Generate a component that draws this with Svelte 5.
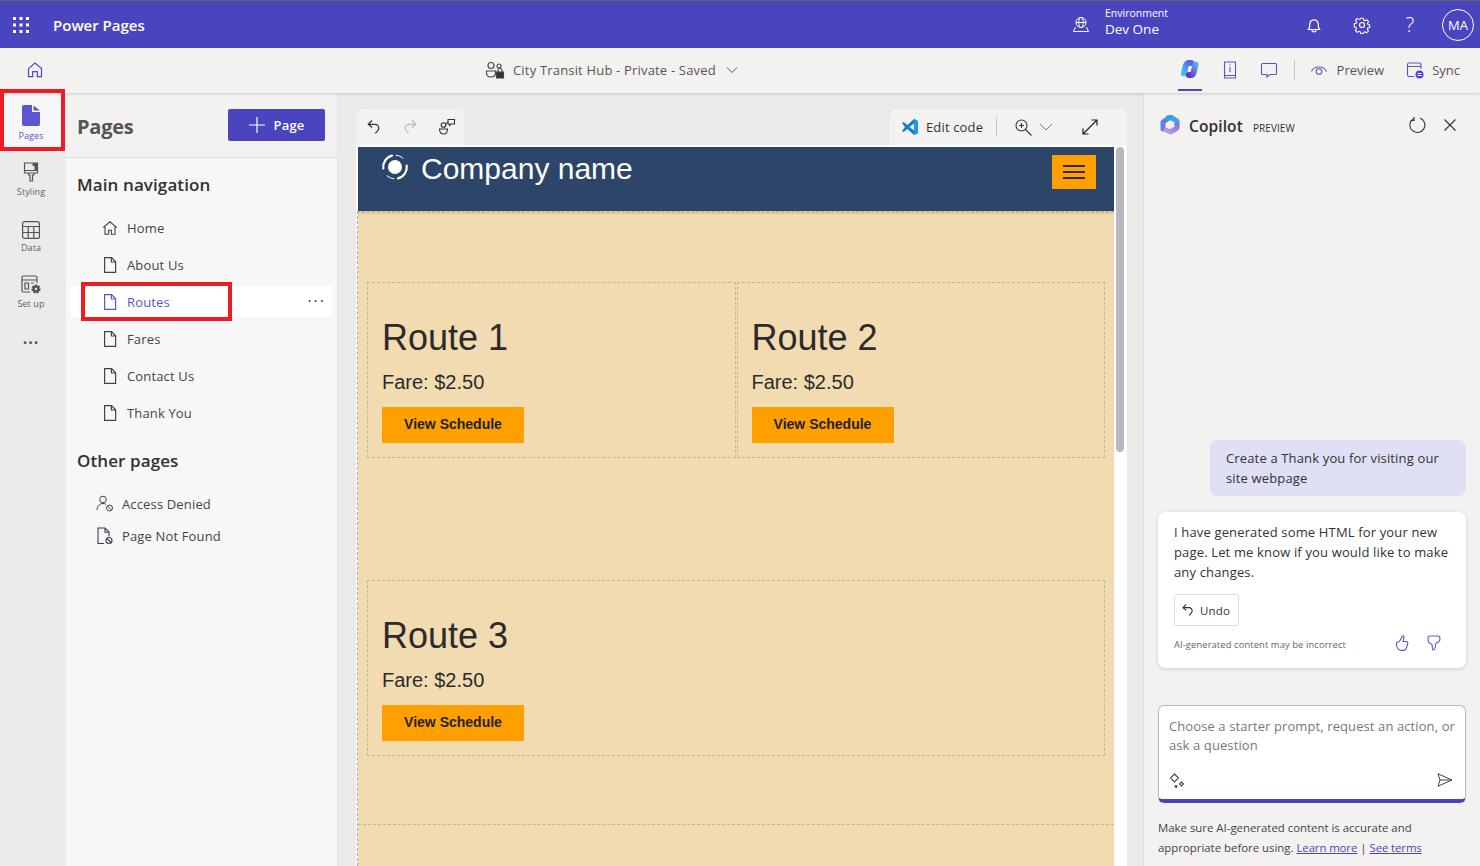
<script>
  const mainNav = [
    { label: 'Home', icon: 'home' },
    { label: 'About Us', icon: 'page' },
    { label: 'Routes', icon: 'page', active: true },
    { label: 'Fares', icon: 'page' },
    { label: 'Contact Us', icon: 'page' },
    { label: 'Thank You', icon: 'page' }
  ];
  const routes = ['Route 1', 'Route 2'];
</script>

{#snippet undoIcon(size = 16)}
  <svg width={size} height={size} viewBox="0 0 16 16" fill="none" stroke="currentColor" stroke-width="1.200"><path d="M6 1.500 2.200 5.300 6.200 8.500M2.400 5.300h6.800a3.700 3.700 0 0 1 3.600 3.800c0 2-1.300 3.300-3.500 5.200"/></svg>
{/snippet}

{#snippet fileIcon()}
  <svg width="16" height="18" viewBox="0 0 16 18" fill="none" stroke="currentColor" stroke-width="1.200"><path d="M2.600 1.600h7l4 4.200v10.600h-11zM9.400 1.600v4.400h4.200"/></svg>
{/snippet}

{#snippet card(title)}
  <h2>{title}</h2>
  <p>Fare: $2.50</p>
  <span class="cta">View Schedule</span>
{/snippet}

<div class="app">
  <header class="topbar">
    <svg class="waffle" width="16" height="16" viewBox="0 0 16 16" fill="#fff">
      {#each [0, 6.500, 13] as y}{#each [0, 6.500, 13] as x}<rect x={x} y={y} width="3" height="3" />{/each}{/each}
    </svg>
    <span class="brand">Power Pages</span>
    <div class="env">
      <svg width="18" height="18" viewBox="0 0 18 18" fill="none" stroke="#fff" stroke-width="1"><circle cx="9" cy="6.500" r="5"/><ellipse cx="9" cy="6.500" rx="2.200" ry="5"/><path d="M4 6.500h10M3.500 11 1.500 15.500h15L14.500 11"/></svg>
      <div class="env-text"><small>Environment</small><strong>Dev One</strong></div>
    </div>
    <div class="top-icons">
      <svg width="18" height="18" viewBox="0 0 18 18" fill="none" stroke="#fff" stroke-width="1.200"><path d="M3.500 13.500c1-1 1.300-2 1.300-5.500a4.200 4.200 0 0 1 8.400 0c0 3.500.3 4.500 1.300 5.500zM7 14c0 2.500 4 2.500 4 0"/></svg>
      <svg width="18" height="18" viewBox="0 0 18 18" fill="none" stroke="#fff" stroke-width="1.200"><circle cx="9" cy="9" r="2.500"/><path d="M7.600 1.500h2.800l.5 2.200 1.400.6 2-1.200 2 2-1.200 2 .6 1.400 1.800.5v2.800l-2 .5-.6 1.400 1.200 2-2 2-2-1.200-1.400.6-.5 1.400H7.600l-.5-1.900-1.400-.6-2 1.200-2-2 1.200-2-.6-1.400-1.800-.5V7.500l2-.5.5-1.400-1.200-2 2-2 2 1.200 1.400-.6z" transform="translate(.9 .9) scale(.9)"/></svg>
      <span class="question">?</span>
      <span class="avatar">MA</span>
    </div>
  </header>

  <div class="subbar">
    <svg class="home-btn" width="18" height="18" viewBox="0 0 18 18" fill="none" stroke="#4f48c4" stroke-width="1.200"><path d="M2.500 7.600 9 2l6.500 5.600v8h-4.200v-5H6.700v5H2.500z"/></svg>
    <div class="site">
      <svg width="20" height="18" viewBox="0 0 20 18" fill="none" stroke="#444" stroke-width="1.100"><circle cx="6" cy="4.500" r="3"/><circle cx="14" cy="5" r="2"/><path d="M1.500 10h9v2c0 3-2 4-4.500 4s-4.500-1-4.500-4z"/><rect x="11.500" y="11" width="7" height="6" fill="#333"/><path d="M13 11V9.500a2 2 0 0 1 4 0V11"/></svg>
      <span>City Transit Hub - Private - Saved</span>
      <svg width="12" height="8" viewBox="0 0 12 8" fill="none" stroke="#555" stroke-width="1"><path d="m1 1.500 5 5 5-5"/></svg>
    </div>
    <div class="sub-actions">
      <span class="tab-selected">
        <svg width="22" height="20" viewBox="0 0 20 18" fill="none" stroke-linecap="round">
          <defs>
            <linearGradient id="cgl" x1="0" y1="1" x2="1" y2="0"><stop offset="0" stop-color="#45c0f0"/><stop offset="1" stop-color="#5a5ce8"/></linearGradient>
            <linearGradient id="cgr" x1="1" y1="0" x2="0" y2="1"><stop offset="0" stop-color="#5aa5f5"/><stop offset="1" stop-color="#6a2fc0"/></linearGradient>
          </defs>
          <path d="M11 3.500H9C7 3.500 6.500 5 6 6.500L4.500 13" stroke="url(#cgl)" stroke-width="5.500"/>
          <path d="M15 5 13.500 11.500C13 13.500 12 14.500 10.500 14.500H9" stroke="url(#cgr)" stroke-width="5.500"/>
        </svg>
      </span>
      <svg class="ic-book" width="14" height="18" viewBox="0 0 14 18" fill="none" stroke="#5b55c9" stroke-width="1.100"><path d="M1.500 1h11v16h-11zM1.500 14.500h11M7 6v5M7 3.500v1"/></svg>
      <svg class="ic-chat" width="18" height="18" viewBox="0 0 18 18" fill="none" stroke="#5b55c9" stroke-width="1.100"><path d="M2.500 2.500h13a1 1 0 0 1 1 1v9a1 1 0 0 1-1 1H10L7 16v-2.500H2.500a1 1 0 0 1-1-1v-9a1 1 0 0 1 1-1z"/></svg>
      <i class="sep"></i>
      <span class="action"><svg width="18" height="14" viewBox="0 0 18 14" fill="none" stroke="#5b55c9" stroke-width="1.100"><path d="M1.500 8.500C4 2.500 14 2.500 16.500 8.500"/><circle cx="9" cy="8.500" r="2.800"/></svg>Preview</span>
      <span class="action sync"><svg width="18" height="18" viewBox="0 0 18 18" fill="none" stroke="#5b55c9" stroke-width="1.100"><path d="M8 15.500H3a1.500 1.500 0 0 1-1.500-1.500V3.500A1.500 1.500 0 0 1 3 2h10.500A1.500 1.500 0 0 1 15 3.500V8M1.500 5.500H15"/><circle cx="13.500" cy="13.500" r="4" fill="#4f48c4" stroke="none"/><path d="M11.500 12.500h4M11.500 14.500h4" stroke="#fff"/></svg>Sync</span>
    </div>
  </div>

  <div class="main">
    <nav class="rail">
      <div class="rail-item current">
        <svg width="18" height="21" viewBox="0 0 18 21"><path d="M2 0h8v7h8v12a2 2 0 0 1-2 2H2a2 2 0 0 1-2-2V2a2 2 0 0 1 2-2z" fill="#5b55d0"/><path d="M11.500.5 18 5.500h-6.500z" fill="#5b55d0"/></svg>
        <span>Pages</span>
      </div>
      <div class="rail-item">
        <svg width="16" height="21" viewBox="0 0 16 21" fill="none" stroke="#555" stroke-width="1.200"><path d="M1.500 1h13v10h-13zM1.500 8.500h13M5.500 11v2h1.500v6h2.500v-6H11v-2"/><path d="M9.500 1h5v7h-3V4h-2z" fill="#555" stroke="none"/></svg>
        <span>Styling</span>
      </div>
      <div class="rail-item">
        <svg width="18" height="18" viewBox="0 0 18 18" fill="none" stroke="#555" stroke-width="1.200"><rect x=".6" y=".6" width="16.800" height="16.800" rx="2"/><path d="M.6 5.500h16.800M.6 11.500h16.800M6.200 5.500v12M11.800 5.500v12"/></svg>
        <span>Data</span>
      </div>
      <div class="rail-item">
        <svg width="21" height="20" viewBox="0 0 21 20" fill="none" stroke="#555" stroke-width="1.200"><path d="M9 17H2.500A1.500 1.500 0 0 1 1 15.500v-13A1.500 1.500 0 0 1 2.500 1h12A1.500 1.500 0 0 1 16 2.500V8M1 5h15M4 8h3.500v6H4zM10 8h3"/><circle cx="15" cy="14" r="3.500" fill="#555" stroke-dasharray="2 1" stroke-width="2.200"/><circle cx="15" cy="14" r="1.200" fill="#ebebeb" stroke="none"/></svg>
        <span>Set up</span>
      </div>
      <div class="rail-more">···</div>
      <div class="red rail-red"></div>
    </nav>

    <aside class="panel">
      <div class="panel-head">
        <h1>Pages</h1>
        <span class="add-page">
          <svg width="16" height="16" viewBox="0 0 16 16" stroke="#fff" stroke-width="1.200"><path d="M8 0v16M0 8h16"/></svg>
          Page
        </span>
      </div>
      <h3>Main navigation</h3>
      <ul class="nav">
        {#each mainNav as item}
          <li class:active={item.active}>
            {#if item.icon === 'home'}
              <svg width="16" height="16" viewBox="0 0 16 16" fill="none" stroke="currentColor" stroke-width="1.100"><path d="M1.200 7.600 8 1.800l6.800 5.800M3 6.500v7.800h3.600v-4h2.800v4H13V6.500"/></svg>
            {:else}
              {@render fileIcon()}
            {/if}
            <span>{item.label}</span>
            {#if item.active}
              <em class="dots">···</em>
              <div class="red nav-red"></div>
            {/if}
          </li>
        {/each}
      </ul>
      <h3 class="other">Other pages</h3>
      <ul class="nav compact">
        <li>
          <svg width="18" height="18" viewBox="0 0 18 18" fill="none" stroke="#444" stroke-width="1"><circle cx="7" cy="4.500" r="3.300"/><path d="M1 15c0-4 3-6.500 6-6.500 1 0 2 .2 3 .8"/><circle cx="13.500" cy="13" r="3"/><path d="m11.500 11 4 4"/></svg>
          <span>Access Denied</span>
        </li>
        <li>
          <svg width="18" height="18" viewBox="0 0 18 18" fill="none" stroke="#44375f" stroke-width="1.100"><path d="M8 16.500H2V1h7l4 4v4.500M9 1v4.300h4"/><circle cx="13" cy="13.500" r="3"/><path d="m11 11.500 4 4"/></svg>
          <span>Page Not Found</span>
        </li>
      </ul>
    </aside>

    <section class="canvas">
      <div class="toolbars">
        <div class="tools left-tools">
          <span class="tool">{@render undoIcon()}</span>
          <span class="tool off">
            <svg width="16" height="16" viewBox="0 0 16 16" fill="none" stroke="currentColor" stroke-width="1.200"><path d="M10 1.500l3.800 3.800-4 3.200M13.600 5.300H6.800A3.700 3.700 0 0 0 3.200 9.100c0 2 1.300 3.300 3.500 5.200"/></svg>
          </span>
          <span class="tool">
            <svg width="18" height="18" viewBox="0 0 18 18" fill="none" stroke="#333" stroke-width="1.100"><circle cx="5.500" cy="7" r="2.300"/><path d="M1.500 11h8c0 3.500-1.500 5-4 5s-4-1.500-4-5zM10 1.500h6.500v4.500H13l-1.500 1.500V6H10zM8 5.500l2-1"/></svg>
          </span>
        </div>
        <div class="tools right-tools">
          <svg width="18" height="18" viewBox="0 0 18 18"><path d="M13 1 6.500 7 2.500 4 1 5l3 4-3 4 1.500 1 4-3 6.500 6 4-2V3z" fill="#0f7dc8"/><path d="M13 1v16l4-2V3z" fill="#1a9ae8"/><path d="M13 5.500 8.500 9l4.500 3.500z" fill="#f3f2f1"/></svg>
          <span class="edit">Edit code</span>
          <i class="sep"></i>
          <svg class="zoom-ic" width="17" height="17" viewBox="0 0 17 17" fill="none" stroke="#333" stroke-width="1.100"><circle cx="6.500" cy="6.500" r="5.500"/><path d="m10.500 10.500 6 6M6.500 4v5M4 6.500h5"/></svg>
          <svg class="zoom-ch" width="14" height="8" viewBox="0 0 14 8" fill="none" stroke="#5b7aa0" stroke-width="1"><path d="m1 1 6 6 6-6"/></svg>
          <svg class="expand" width="16" height="16" viewBox="0 0 16 16" fill="none" stroke="#222" stroke-width="1.200"><path d="M9.500 1H15v5.500M15 1 1 15M1 9.500V15h5.500"/></svg>
        </div>
      </div>

      <div class="viewport">
        <div class="page">
          <div class="site-header">
            <div class="logo-row">
              <svg width="28" height="28" viewBox="0 0 28 28" fill="none" stroke="#fff" stroke-linecap="round">
                <circle cx="14" cy="14" r="7" fill="#fff" stroke="none"/>
                <path d="M2.300 15.500A11.800 11.800 0 0 1 11 2.600" stroke-width="2.200"/>
                <path d="M25.700 12.500A11.800 11.800 0 0 1 17 25.400" stroke-width="2.200"/>
                <path d="M6 22.800A11.800 11.800 0 0 0 13 25.800" stroke-width="1"/>
                <path d="M22 5.200A11.800 11.800 0 0 0 15 2.200" stroke-width="1"/>
              </svg>
              <span>Company name</span>
            </div>
            <span class="burger"><i></i><i></i><i></i></span>
          </div>
          <div class="sections">
            <div class="row two">
              {#each routes as r}
                <div class="cell">{@render card(r)}</div>
              {/each}
            </div>
            <div class="row three">
              <div class="cell">{@render card('Route 3')}</div>
            </div>
            <div class="next-section"></div>
          </div>
        </div>
        <div class="scroll"><b></b></div>
      </div>
    </section>

    <aside class="copilot">
      <div class="cp-head">
        <svg width="22" height="22" viewBox="0 0 22 22" fill="none" stroke-width="5" stroke-linecap="round" stroke-linejoin="round">
          <defs>
            <linearGradient id="cpa" x1="0" y1="0" x2="1" y2="1"><stop offset="0" stop-color="#5c80e4"/><stop offset="1" stop-color="#8a70dc"/></linearGradient>
            <linearGradient id="cpb" x1="0" y1="0" x2="1" y2="1"><stop offset="0" stop-color="#2f9fe8"/><stop offset="1" stop-color="#3cb4ea"/></linearGradient>
            <linearGradient id="cpc" x1="1" y1="0" x2="0" y2="1"><stop offset="0" stop-color="#7b7be0"/><stop offset="1" stop-color="#c09ae6"/></linearGradient>
          </defs>
          <path d="M4 15V8l6-4" stroke="url(#cpa)"/>
          <path d="M9 4l3-.5L18 7v3" stroke="url(#cpb)"/>
          <path d="M18 9.500V14l-6.500 4L7 16" stroke="url(#cpc)"/>
        </svg>
        <span class="cp-title">Copilot</span>
        <span class="cp-tag">PREVIEW</span>
        <svg class="cp-refresh" width="18" height="18" viewBox="0 0 18 18" fill="none" stroke="#333" stroke-width="1.100"><path d="M5.500 2.600A7.500 7.500 0 1 0 12 2M6 1v3.500H2.500" /></svg>
        <svg class="cp-close" width="12" height="12" viewBox="0 0 12 12" stroke="#333" stroke-width="1.100"><path d="m.5.500 11 11M11.500.500l-11 11"/></svg>
      </div>
      <div class="cp-body">
        <div class="bubble-user">Create a Thank you for visiting our site webpage</div>
        <div class="bubble-bot">
          <p>I have generated some HTML for your new page. Let me know if you would like to make any changes.</p>
          <span class="undo">{@render undoIcon(14)}Undo</span>
          <div class="bot-foot">
            <small>AI-generated content may be incorrect</small>
            <svg width="14" height="16" viewBox="0 0 14 16" fill="none" stroke="#5b55c9" stroke-width="1.100"><path d="M1.500 9c0-2 2-2.500 3-2.500L7.500 1c1-.5 1.500.5 1.500 1.500L8 6.500h3c2 0 2 1.500 1.500 3L11 14c-.5 1.500-2 1.500-4 1.500-3 0-5.500-2-5.500-6.500z"/></svg>
            <svg class="down" width="14" height="16" viewBox="0 0 14 16" fill="none" stroke="#5b55c9" stroke-width="1.100"><path d="M1 2.500C1 1.500 2 1 3 1h8c1.500 0 2 1 2 2.500 0 2.500-2 4.500-4 4.500L8 13c-.2 2-2 2.500-2.500 1L5 9.500 2.500 8C1 7 1 4 1 2.500z"/></svg>
          </div>
        </div>
        <div class="composer">
          <div class="hint">Choose a starter prompt, request an action, or ask a question</div>
          <div class="composer-foot">
            <svg width="16" height="16" viewBox="0 0 16 16" fill="none" stroke="#444" stroke-width="1.100"><path d="m5.500 1 4 4-4 4-4-4zM12.500 9l2 2-2 2-2-2zM7 12.500l1 1-1 1-1-1z"/></svg>
            <svg width="16" height="14" viewBox="0 0 16 14" fill="none" stroke="#444" stroke-width="1"><path d="M1 .8 15 7 1 13.200 3 7zM3 7h12"/></svg>
          </div>
        </div>
        <p class="legal">Make sure AI-generated content is accurate and<br />appropriate before using. <a href="#learn">Learn more</a><span class="pipe">|</span><a href="#terms">See terms</a></p>
      </div>
    </aside>
  </div>
</div>

<style>
  :global(body) { margin: 0; overflow: hidden; }
  * { box-sizing: border-box; }
  .app {
    width: 1480px; height: 866px; display: grid; grid-template-rows: 48px 45px 1fr;
    font-family: "Open Sans", "Noto Sans", sans-serif; font-size: 13px; color: #323130;
    background: #f3f2f1; overflow: hidden; letter-spacing: .15px;
  }
  svg { display: block; flex: none; }
  ul { list-style: none; margin: 0; padding: 0; }
  h1, h2, h3, p { margin: 0; }

  .topbar {
    background: #4b44bf; border-top: 1px solid #666; display: flex; align-items: center;
    padding: 0 14px 0 13px; color: #fff;
  }
  .brand { margin-left: 24px; font-size: 15px; font-weight: 600; letter-spacing: 0; }
  .env { margin-left: auto; display: flex; align-items: center; gap: 15px; }
  .env-text { display: flex; flex-direction: column; line-height: 16px; margin-bottom: 8px; }
  .env-text small { font-size: 10.500px; letter-spacing: 0; }
  .env-text strong { font-weight: 400; font-size: 13.500px; letter-spacing: 0; }
  .top-icons { margin-left: 137px; display: flex; align-items: center; gap: 30px; margin-right: -8px; }
  .question { font-size: 20px; width: 18px; text-align: center; line-height: 18px; font-weight: 300; }
  .avatar {
    width: 32px; height: 32px; border-radius: 50%; border: 1px solid #fff; display: grid; place-items: center;
    font-size: 13px; font-weight: 400; margin-left: -7px; margin-right: 0;
  }

  .subbar {
    display: flex; align-items: center; position: relative; z-index: 3; padding: 0 0 2px 26px;
    box-shadow: 0 1px 3px rgba(0,0,0,.16); background: #f3f2f1;
  }
  .site { position: absolute; left: 485px; display: flex; align-items: center; gap: 8px; color: #555; letter-spacing: .18px; }
  .site svg:last-child { margin-left: 2px; }
  .sub-actions { margin-left: auto; display: flex; align-items: center; height: 100%; color: #555; padding-right: 20px; }
  .tab-selected { width: 24px; height: 100%; display: grid; place-items: center; border-bottom: 2px solid #4b44bf; margin-right: 21px; }
  .ic-book { margin-right: 23px; }
  .ic-chat { margin-right: 16px; }
  .sep { width: 1px; height: 20px; background: #c8c6c4; display: block; }
  .action { display: flex; align-items: center; gap: 9px; margin-left: 15px; letter-spacing: 0; }
  .action.sync { margin-left: 22px; gap: 8px; }

  .main { display: flex; min-height: 0; }
  .rail { width: 66px; background: #ebebeb; position: relative; padding-top: 0; flex: none; }
  .rail-item {
    height: 56px; display: flex; flex-direction: column; align-items: center; justify-content: flex-end;
    color: #616161; font-size: 9px; gap: 2px; padding: 0 4px 7px 0; letter-spacing: .1px;
  }
  .rail-item.current { color: #5b55d0; background: #f7f7f7; gap: 3px; }
  .rail-more { text-align: center; font-weight: 700; font-size: 16px; line-height: 16px; color: #555; margin-top: 17px; letter-spacing: 1px; padding-right: 4px; }
  .red { position: absolute; border: 4.500px solid #ed1c24; pointer-events: none; z-index: 5; }
  .rail-red { left: 0; top: -4px; width: 65px; height: 62px; }

  .panel { width: 272px; flex: none; background: #f7f7f7; border-right: 1px solid #e6e5e4; }
  .panel-head {
    height: 65px; display: flex; align-items: flex-start; justify-content: space-between; padding: 16px 12px 0 11px;
    background: #f3f2f1; border-bottom: 1px solid #dcdbda;
  }
  .panel-head h1 { font-size: 20px; font-weight: 700; color: #555; margin-top: 4px; letter-spacing: -.25px; }
  .add-page {
    width: 97px; height: 32px; background: #4b44bf; border-radius: 2px; color: #fff; display: flex; align-items: center;
    justify-content: center; gap: 9px; font-weight: 600; font-size: 13px;
  }
  h3 { font-size: 17px; font-weight: 600; padding-left: 11px; margin-top: 14px; line-height: 26px; color: #323130; letter-spacing: .1px; }
  h3.other { margin-top: 17px; font-size: 17px; }
  .nav { margin-top: 11px; }
  .nav li {
    height: 37px; display: flex; align-items: center; gap: 9px; padding-left: 36px; position: relative; color: #444;
  }
  .nav li.active { color: #5b55c9; }
  .nav li.active::before { content: ''; position: absolute; left: 4px; right: 5px; top: 3px; bottom: 3px; background: #fff; z-index: 0; }
  .nav li > * { position: relative; }
  .dots { position: absolute !important; right: 11px; top: 11px; font-style: normal; font-weight: 400; font-size: 16px; line-height: 15px; color: #444; letter-spacing: 2px; }
  .nav-red { position: absolute !important; left: 15px; top: -1px; width: 151px; height: 39px; }
  .nav.compact { margin-top: 14px; }
  .nav.compact li { height: 32px; padding-left: 30px; gap: 8px; }

  .canvas { width: 804px; flex: none; background: #ebeae8; display: flex; flex-direction: column; padding: 16px 15px 0 18px; min-height: 0; }
  .toolbars { display: flex; justify-content: space-between; height: 36px; flex: none; }
  .tools { background: #f3f2f1; border-radius: 6px 6px 0 0; display: flex; align-items: center; }
  .left-tools { width: 108px; padding: 0 0 0 10px; gap: 20px; color: #333; }
  .tool { display: block; }
  .tool.off { color: #bbb; }
  .right-tools { width: 237px; padding-left: 11px; }
  .edit { margin-left: 7px; color: #333; }
  .right-tools .sep { margin-left: 13px; }
  .zoom-ic { margin-left: 18px; }
  .zoom-ch { margin-left: 7px; }
  .expand { margin-left: 29px; }

  .viewport { flex: 1; min-height: 0; display: flex; background: #fff; padding-top: 2px; overflow: hidden; padding-left: 2px; }
  .page { width: 756px; font-family: "Liberation Sans", Arial, sans-serif; letter-spacing: 0; background: #f2dbb0; color: #2b2b2b; display: flex; flex-direction: column; }
  .site-header {
    height: 64px; background: #2c4569; display: flex; justify-content: space-between; padding: 7px 18px 0 23px; flex: none; color: #fff;
  }
  .logo-row { display: flex; gap: 12px; align-items: flex-start; font-size: 30px; line-height: 32px; margin-top: -1px; }
  .logo-row svg { margin-top: 0; }
  .burger { width: 44px; height: 34px; background: #ff9f00; display: flex; flex-direction: column; justify-content: center; align-items: center; gap: 4px; margin-top: 1px; }
  .burger i { display: block; width: 22px; height: 2px; background: #2b2b2b; }
  .sections { flex: 1; border-top: 1px dashed #aaa; border-left: 1px dashed #aaa; margin-left: -1px; padding: 70px 9px 0 9px; box-shadow: inset 0 3px 3px -2px rgba(120,90,40,.3); }
  .row { display: flex; gap: 1px; }
  .three { margin-top: 122px; }
  .cell { flex: 1; height: 176px; border: 1px dashed #c0b59e; padding: 33px 15px 0 14px; }
  h2 { font-size: 36px; font-weight: 400; line-height: 44px; }
  .cell p { font-size: 20px; line-height: 24px; margin-top: 10px; }
  .cta { margin-top: 13px; display: grid; place-items: center; width: 142px; height: 36px; padding-bottom: 2px; background: #ff9f00; font-weight: 700; font-size: 14px; color: #222; letter-spacing: 0; }
  .next-section { margin: 68px -9px 0; border-top: 1px dashed #c0b59e; }
  .scroll { width: 12px; background: #fff; padding: 0 1px; margin-left: 1px; }
  .scroll b { display: block; height: 305px; background: #b9b8bf; border-radius: 5px; width: 8px; }

  .copilot { flex: 1; border-left: 2px solid #e4e3e2; padding: 0 14px 0 14px; display: flex; flex-direction: column; min-width: 0; }
  .cp-head { height: 67px; display: flex; align-items: center; flex: none; padding: 0 0 4px 1px; }
  .cp-title { margin-left: 8px; font-size: 15.500px; font-weight: 600; letter-spacing: .1px; margin-top: 2px; }
  .cp-tag { font-size: 10px; margin-left: 10px; font-weight: 500; margin-top: 6px; letter-spacing: .1px; }
  .cp-refresh { margin-left: auto; }
  .cp-close { margin-left: 18px; margin-right: 10px; }
  .cp-body { flex: 1; display: flex; flex-direction: column; align-items: stretch; padding-top: 280px; }
  .bubble-user { margin-left: 52px; height: 56px; background: #dfdff5; border-radius: 8px; padding: 8px 16px; line-height: 20px; color: #333; }
  .bubble-bot { margin-top: 16px; height: 156px; background: #fff; border-radius: 8px; box-shadow: 0 1px 4px rgba(0,0,0,.16); padding: 10px 16px; }
  .bubble-bot p { line-height: 20px; color: #333; }
  .undo { margin-top: 12px; width: 65px; height: 32px; border: 1px solid #ddd; border-radius: 3px; display: flex; align-items: center; gap: 5px; padding-left: 6px; font-size: 11.500px; }
  .bot-foot { display: flex; align-items: center; margin-top: 8px; }
  .bot-foot small { font-size: 9.400px; color: #666; flex: 1; padding-top: 4px; letter-spacing: .1px; }
  .bot-foot .down { margin-left: 18px; margin-right: 9px; }
  .composer { margin-top: 37px; height: 98px; background: #fff; border: 1px solid #bbb; border-bottom: 4px solid #4b44bf; border-radius: 6px; padding: 11px 6px 0 10px; color: #777; line-height: 19px; display: flex; flex-direction: column; }
  .hint { letter-spacing: .1px; }
  .composer-foot { display: flex; justify-content: space-between; margin-top: auto; padding: 0 6px 10px 0; }
  .legal { margin-top: 15px; font-size: 11.400px; line-height: 20px; color: #444; letter-spacing: 0; }
  .legal a { color: #4b44bf; letter-spacing: -.1px; }
  .pipe { margin: 0 3px; }
</style>
